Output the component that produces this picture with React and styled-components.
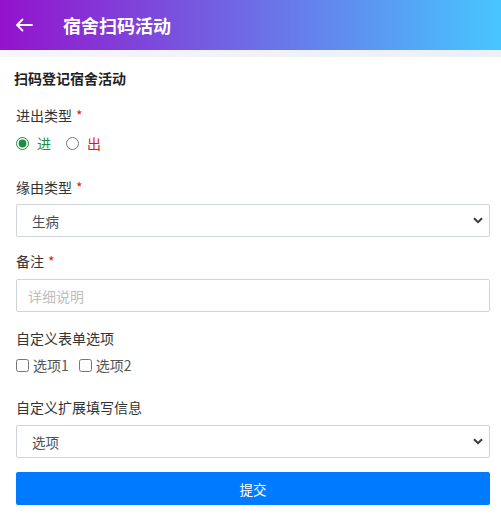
import React, { useState } from "react";
import styled, { createGlobalStyle } from "styled-components";

const GlobalStyle = createGlobalStyle`
  html, body {
    margin: 0;
    padding: 0;
    background: #ffffff;
    font-family: "Noto Sans CJK SC", "Noto Sans", sans-serif;
  }
  * { box-sizing: border-box; }
`;

const chevron =
  "url(\"data:image/svg+xml,%3Csvg xmlns='http://www.w3.org/2000/svg' width='10' height='7' viewBox='0 0 10 7'%3E%3Cpath d='M1 1.2l4 4 4-4' fill='none' stroke='%23343a40' stroke-width='2'/%3E%3C/svg%3E\")";

const Page = styled.div`
  width: 501px;
  min-height: 516px;
  background: #ffffff;
`;

const Header = styled.header`
  height: 50px;
  display: flex;
  align-items: center;
  padding-left: 14px;
  gap: 16px;
  background: linear-gradient(to right, #9412cc, #47c6ff);
  color: #ffffff;
`;

const BackButton = styled.button`
  width: 20px;
  height: 20px;
  padding: 0;
  border: none;
  background: none;
  display: flex;
  align-items: center;
  justify-content: center;
  color: #ffffff;
  margin-right: 13px;
`;

const HeaderTitle = styled.h1`
  margin: 0;
  font-size: 18px;
  font-weight: 700;
`;

const Strip = styled.div`
  height: 7px;
  background: linear-gradient(to right, #f5f6fa, #eceff7);
`;

const Form = styled.form`
  padding: 9px 11px 0 16px;
  display: flex;
  flex-direction: column;
`;

const FormTitle = styled.div`
  font-size: 14px;
  font-weight: 700;
  color: #222;
  margin-left: -2px;
  line-height: 24px;
  margin-bottom: 15px;
`;

const Group = styled.div`
  display: flex;
  flex-direction: column;
  margin-bottom: ${(p) => p.$gap || 16}px;
`;

const Label = styled.label`
  font-size: 14px;
  color: #333;
  line-height: 20px;
  margin-bottom: ${(p) => p.$mb || 7}px;
`;

const Star = styled.span`
  color: #e8151b;
  margin-left: 4px;
`;

const Row = styled.div`
  display: flex;
  align-items: center;
  gap: ${(p) => p.$gap || 10}px;
  height: 20px;
`;

const Choice = styled.label`
  display: flex;
  align-items: center;
  gap: ${(p) => p.$gap || 4}px;
  font-size: 14px;
  color: ${(p) => p.$color || "#555"};
`;

const Radio = styled.input`
  margin: 0;
  width: 13px;
  height: 13px;
  accent-color: #1e8e3e;
`;

const Check = styled.input`
  margin: 0;
  width: 13px;
  height: 13px;
`;

const Select = styled.select`
  appearance: none;
  width: 100%;
  height: 33px;
  border: 1px solid #ced4da;
  border-radius: 2px;
  padding: 0 30px 0 15px;
  font-family: inherit;
  font-size: 13.5px;
  color: #495057;
  background: #fff ${chevron} no-repeat right 6px center;
`;

const Input = styled.input`
  width: 100%;
  height: 33px;
  border: 1px solid #ced4da;
  border-radius: 2px;
  padding: 0 11px;
  font-family: inherit;
  font-size: 14px;
  color: #495057;
  &::placeholder {
    color: #bdbdbd;
  }
`;

const Submit = styled.button`
  width: 100%;
  height: 33px;
  border: none;
  border-radius: 2px;
  background: #007bff;
  color: #fff;
  font-family: inherit;
  font-size: 13.5px;
`;

export default function App() {
  const [dir, setDir] = useState("in");
  return (
    <Page>
      <GlobalStyle />
      <Header>
        <BackButton type="button" aria-label="back">
          <svg width="18" height="14" viewBox="0 0 18 14" fill="none" stroke="#fff" strokeWidth="1.8" strokeLinecap="round" strokeLinejoin="round">
            <path d="M17 7H2M7.5 1.5L2 7l5.5 5.5" />
          </svg>
        </BackButton>
        <HeaderTitle>宿舍扫码活动</HeaderTitle>
      </Header>
      <Strip />
      <Form onSubmit={(e) => e.preventDefault()}>
        <FormTitle>扫码登记宿舍活动</FormTitle>
        <Group $gap={24}>
          <Label $mb={8}>
            进出类型<Star>*</Star>
          </Label>
          <Row $gap={15}>
            <Choice $color="#1e8e3e" $gap={8}>
              <Radio type="radio" name="dir" checked={dir === "in"} onChange={() => setDir("in")} />
              进
            </Choice>
            <Choice $color="#e8151b" $gap={8}>
              <Radio type="radio" name="dir" checked={dir === "out"} onChange={() => setDir("out")} />
              出
            </Choice>
          </Row>
        </Group>
        <Group $gap={14}>
          <Label $mb={7}>
            缘由类型<Star>*</Star>
          </Label>
          <Select defaultValue="sick">
            <option value="sick">生病</option>
          </Select>
        </Group>
        <Group $gap={16}>
          <Label $mb={8}>
            备注<Star>*</Star>
          </Label>
          <Input placeholder="详细说明" />
        </Group>
        <Group $gap={22}>
          <Label $mb={7}>自定义表单选项</Label>
          <Row $gap={10}>
            <Choice>
              <Check type="checkbox" />
              选项1
            </Choice>
            <Choice>
              <Check type="checkbox" />
              选项2
            </Choice>
          </Row>
        </Group>
        <Group $gap={14}>
          <Label $mb={8}>自定义扩展填写信息</Label>
          <Select defaultValue="opt">
            <option value="opt">选项</option>
          </Select>
        </Group>
        <Submit type="submit">提交</Submit>
      </Form>
    </Page>
  );
}
